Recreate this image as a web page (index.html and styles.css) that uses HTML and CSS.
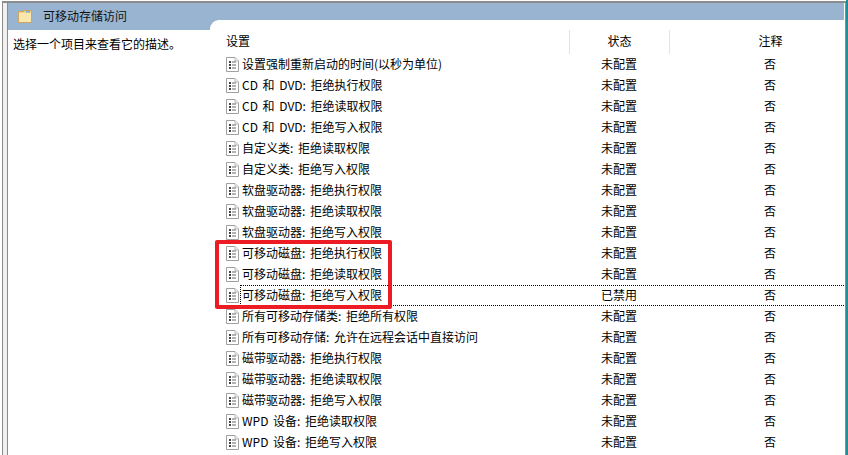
FILE: index.html
```html
<!DOCTYPE html>
<html lang="zh-CN">
<head>
<meta charset="utf-8">
<title>可移动存储访问</title>
<link rel="stylesheet" href="styles.css">
</head>
<body>
<svg class="defs" width="0" height="0" aria-hidden="true">
  <symbol id="doc" viewBox="0 0 13 15">
    <path d="M.5.500h8.500l3.500 3.500v10.500h-12z" fill="#fff" stroke="#a0a0a0"/>
    <path d="M9 .5v3.500h3.500" fill="#eee" stroke="#bbb"/>
    <path d="M3 4h2v2h-2zM3 7h2v2h-2zM3 10h2v2h-2z" fill="#444"/>
    <path d="M6 5h4M6 8h4M6 11h4" stroke="#666"/>
  </symbol>
</svg>
<div class="page">
  <div class="frame">
    <div class="inner">
      <aside class="side">
        <div class="title">
          <svg class="folder" width="14" height="13" viewBox="0 0 14 13">
            <path d="M.5 1.500h5l1-1h7v12h-13z" fill="#f0d48c" stroke="#c9a860"/>
            <path d="M1 3h12v9h-12z" fill="#fbe7ae"/>
            <path d="M8 1h4v1.500h-4z" fill="#7fa8d8"/>
          </svg>
          <span>可移动存储访问</span>
        </div>
        <p class="desc">选择一个项目来查看它的描述。</p>
      </aside>
      <main class="panel">
        <div class="head">
          <div class="col-name">设置</div>
          <div class="col-state">状态</div>
          <div class="col-note">注释</div>
        </div>
        <div class="row"><svg class="doc"><use href="#doc"/></svg><div class="cells"><div class="name">设置强制重新启动的时间(以秒为单位)</div><div class="state">未配置</div><div class="note">否</div></div></div>
        <div class="row"><svg class="doc"><use href="#doc"/></svg><div class="cells"><div class="name">CD 和 DVD: 拒绝执行权限</div><div class="state">未配置</div><div class="note">否</div></div></div>
        <div class="row"><svg class="doc"><use href="#doc"/></svg><div class="cells"><div class="name">CD 和 DVD: 拒绝读取权限</div><div class="state">未配置</div><div class="note">否</div></div></div>
        <div class="row"><svg class="doc"><use href="#doc"/></svg><div class="cells"><div class="name">CD 和 DVD: 拒绝写入权限</div><div class="state">未配置</div><div class="note">否</div></div></div>
        <div class="row"><svg class="doc"><use href="#doc"/></svg><div class="cells"><div class="name">自定义类: 拒绝读取权限</div><div class="state">未配置</div><div class="note">否</div></div></div>
        <div class="row"><svg class="doc"><use href="#doc"/></svg><div class="cells"><div class="name">自定义类: 拒绝写入权限</div><div class="state">未配置</div><div class="note">否</div></div></div>
        <div class="row"><svg class="doc"><use href="#doc"/></svg><div class="cells"><div class="name">软盘驱动器: 拒绝执行权限</div><div class="state">未配置</div><div class="note">否</div></div></div>
        <div class="row"><svg class="doc"><use href="#doc"/></svg><div class="cells"><div class="name">软盘驱动器: 拒绝读取权限</div><div class="state">未配置</div><div class="note">否</div></div></div>
        <div class="row"><svg class="doc"><use href="#doc"/></svg><div class="cells"><div class="name">软盘驱动器: 拒绝写入权限</div><div class="state">未配置</div><div class="note">否</div></div></div>
        <div class="row"><svg class="doc"><use href="#doc"/></svg><div class="cells"><div class="name">可移动磁盘: 拒绝执行权限</div><div class="state">未配置</div><div class="note">否</div></div></div>
        <div class="row"><svg class="doc"><use href="#doc"/></svg><div class="cells"><div class="name">可移动磁盘: 拒绝读取权限</div><div class="state">未配置</div><div class="note">否</div></div></div>
        <div class="row selected"><svg class="doc"><use href="#doc"/></svg><div class="cells"><div class="name">可移动磁盘: 拒绝写入权限</div><div class="state">已禁用</div><div class="note">否</div></div></div>
        <div class="row"><svg class="doc"><use href="#doc"/></svg><div class="cells"><div class="name">所有可移动存储类: 拒绝所有权限</div><div class="state">未配置</div><div class="note">否</div></div></div>
        <div class="row"><svg class="doc"><use href="#doc"/></svg><div class="cells"><div class="name">所有可移动存储: 允许在远程会话中直接访问</div><div class="state">未配置</div><div class="note">否</div></div></div>
        <div class="row"><svg class="doc"><use href="#doc"/></svg><div class="cells"><div class="name">磁带驱动器: 拒绝执行权限</div><div class="state">未配置</div><div class="note">否</div></div></div>
        <div class="row"><svg class="doc"><use href="#doc"/></svg><div class="cells"><div class="name">磁带驱动器: 拒绝读取权限</div><div class="state">未配置</div><div class="note">否</div></div></div>
        <div class="row"><svg class="doc"><use href="#doc"/></svg><div class="cells"><div class="name">磁带驱动器: 拒绝写入权限</div><div class="state">未配置</div><div class="note">否</div></div></div>
        <div class="row"><svg class="doc"><use href="#doc"/></svg><div class="cells"><div class="name">WPD 设备: 拒绝读取权限</div><div class="state">未配置</div><div class="note">否</div></div></div>
        <div class="row"><svg class="doc"><use href="#doc"/></svg><div class="cells"><div class="name">WPD 设备: 拒绝写入权限</div><div class="state">未配置</div><div class="note">否</div></div></div>
      </main>
    </div>
  </div>
  <div class="strip"></div>
  <div class="callout"></div>
</div>
</body>
</html>
```
FILE: styles.css
```css
* { box-sizing: border-box; }
html, body { margin: 0; padding: 0; background: #fff; }
body {
  font-family: "Noto Sans CJK SC", "Liberation Sans", sans-serif;
  font-size: 12px;
  line-height: 16px;
  color: #000;
}
.defs { position: absolute; }
.page {
  position: relative;
  display: flex;
  width: 848px;
  height: 455px;
  overflow: hidden;
}
.frame {
  flex: 1;
  margin: 1px 0 0 2px;
  padding: 0 1px 0 4px;
  border: solid #8c8c8c;
  border-width: 2px 1px 0 1px;
  background: linear-gradient(90deg, #f0f0f0 4px, #fff 4px);
  min-width: 0;
}
.strip { width: 2px; background: #1f8f96; }
.inner {
  display: flex;
  height: 100%;
  border-left: 1px solid #8c8c8c;
  background: #99b4d1;
}
.side {
  width: 202px;
  flex: none;
  display: flex;
  flex-direction: column;
}
.title {
  height: 27px;
  display: flex;
  align-items: center;
  gap: 11px;
  padding: 0 0 1px 10px;
  color: #111;
}
.folder { flex: none; }
.desc {
  flex: 1;
  margin: 0;
  padding: 6px 0 0 5px;
  background: #fff;
}
.panel {
  flex: 1;
  margin-top: 17px;
  padding-top: 10px;
  background: #fff;
  border-top-left-radius: 9px;
}
.head {
  display: flex;
  height: 24px;
  align-items: center;
}
.col-name { width: 359px; padding: 0 0 2px 16px; }
.col-state, .col-note {
  align-self: stretch;
  display: flex;
  align-items: center;
  justify-content: center;
  padding-bottom: 2px;
  border-left: 1px solid #e3e3e3;
}
.col-state { width: 100px; }
.col-note { flex: 1; padding-left: 27px; }
.row {
  display: flex;
  height: 21px;
}
.doc {
  width: 13px;
  height: 15px;
  margin: 3px 1px 0 16px;
  flex: none;
}
.cells {
  flex: 1;
  display: flex;
  align-items: center;
  padding-bottom: 2px;
  border: 1px solid transparent;
  border-right: 0;
}
.selected .cells {
  border-top: 1px dotted #000;
  border-bottom: 1px dotted #000;
  border-left: 1px dotted #000;
}
.name { width: 328px; padding-left: 1px; white-space: nowrap; word-spacing: 2px; }
.state { width: 100px; text-align: center; }
.note { flex: 1; padding-left: 27px; text-align: center; }
.callout {
  position: absolute;
  left: 215px;
  top: 240px;
  width: 177px;
  height: 69px;
  border: 4px solid #ed1c24;
  border-radius: 2px;
}
```
